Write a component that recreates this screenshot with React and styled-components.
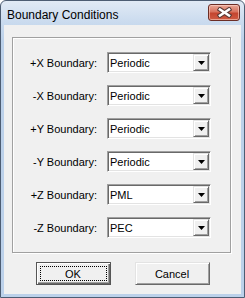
import React from 'react';
import styled, { createGlobalStyle } from 'styled-components';

const Global = createGlobalStyle`
  html, body { margin: 0; padding: 0; background: #fff; }
`;

// Window frame (Windows 7 basic look)
const Window = styled.div`
  width: 245px;
  height: 298px;
  box-sizing: border-box;
  display: flex;
  flex-direction: column;
  border: 1px solid #4d5d73;
  border-radius: 6px 6px 0 0;
  padding: 0 3px 3px;
  background: linear-gradient(#e1eaf5, #c9daee 22px, #bcd1ea 40px, #bcd1ea);
  font-family: "Liberation Sans", Arial, sans-serif;
  color: #000;
  overflow: hidden;
`;

const TitleBar = styled.div`
  height: 24px;
  display: flex;
  align-items: flex-start;
  justify-content: space-between;
  padding: 0 1px 0 3px;
`;

const Title = styled.span`
  font-size: 12px;
  line-height: 14px;
  margin-top: 7px;
  color: #000;
`;

const CloseButton = styled.div`
  width: 32px;
  height: 17px;
  margin-top: 3px;
  box-sizing: border-box;
  border: 1px solid #6b2d25;
  border-radius: 3px;
  background: linear-gradient(#e9a797, #d8735f 45%, #c4452f 55%, #cf5b43);
  box-shadow: inset 0 0 0 1px rgba(255, 220, 210, 0.55);
  display: flex;
  align-items: center;
  justify-content: center;
`;

const Client = styled.div`
  flex: 1;
  background: #f0f0f0;
  display: flex;
  flex-direction: column;
  font-size: 11px;
`;

const GroupBox = styled.div`
  margin: 12px 10px 0 8px;
  padding: 14px 19px 14px 0;
  border: 1px solid #a0a0a0;
  box-shadow: inset 1px 1px #fff, 1px 1px #fff;
  display: grid;
  grid-template-columns: 84px 104px;
  column-gap: 10px;
  row-gap: 12px;
  align-items: center;
`;

const Label = styled.label`
  text-align: right;
  white-space: nowrap;
`;

const Combo = styled.div`
  height: 21px;
  box-sizing: border-box;
  display: flex;
  align-items: center;
  background: #fff;
  border: 1px solid;
  border-color: #a0a0a0 #fff #fff #a0a0a0;
  box-shadow: inset 1px 1px #696969, inset -1px -1px #e3e3e3;
  padding: 1px 1px 1px 2px;
`;

const ComboText = styled.span`
  flex: 1;
  white-space: nowrap;
`;

const DropButton = styled.div`
  width: 16px;
  height: 17px;
  box-sizing: border-box;
  background: #f0f0f0;
  border: 1px solid;
  border-color: #e3e3e3 #696969 #696969 #e3e3e3;
  box-shadow: inset 1px 1px #fff, inset -1px -1px #a0a0a0;
  display: flex;
  align-items: center;
  justify-content: center;
`;

const ButtonRow = styled.div`
  display: flex;
  justify-content: center;
  gap: 24px;
  margin-top: 9px;
`;

const Button = styled.button`
  width: 75px;
  height: 23px;
  box-sizing: border-box;
  padding: ${p => (p.$default ? '3px' : '2px')};
  display: flex;
  background: #f0f0f0;
  font: inherit;
  color: #000;
  border: 1px solid;
  border-color: ${p => (p.$default ? '#555 #555 #555 #555' : '#e3e3e3 #696969 #696969 #e3e3e3')};
  box-shadow: ${p =>
    p.$default
      ? 'inset 1px 1px #fff, inset -1px -1px #696969, inset -2px -2px #a0a0a0'
      : 'inset 1px 1px #fff, inset -1px -1px #a0a0a0'};
`;

const Caption = styled.span`
  flex: 1;
  display: flex;
  align-items: center;
  justify-content: center;
  border: 1px dotted ${p => (p.$focus ? '#000' : 'transparent')};
`;

const Arrow = () => (
  <svg width="7" height="4" viewBox="0 0 7 4">
    <polygon points="0,0 7,0 3.5,4" fill="#000" />
  </svg>
);

const CloseGlyph = () => (
  <svg width="15" height="11" viewBox="0 0 15 11">
    <g strokeLinecap="square">
      <path d="M3 2.5 L12 8.5 M12 2.5 L3 8.5" stroke="#5b3a36" strokeWidth="4.6" />
      <path d="M3 2.5 L12 8.5 M12 2.5 L3 8.5" stroke="#fff" strokeWidth="2.6" />
    </g>
  </svg>
);

const rows = [
  ['+X Boundary:', 'Periodic'],
  ['-X Boundary:', 'Periodic'],
  ['+Y Boundary:', 'Periodic'],
  ['-Y Boundary:', 'Periodic'],
  ['+Z Boundary:', 'PML'],
  ['-Z Boundary:', 'PEC'],
];

export default function App() {
  return (
    <>
      <Global />
      <Window>
        <TitleBar>
          <Title>Boundary Conditions</Title>
          <CloseButton>
            <CloseGlyph />
          </CloseButton>
        </TitleBar>
        <Client>
          <GroupBox>
            {rows.map(([label, value]) => (
              <React.Fragment key={label}>
                <Label>{label}</Label>
                <Combo>
                  <ComboText>{value}</ComboText>
                  <DropButton>
                    <Arrow />
                  </DropButton>
                </Combo>
              </React.Fragment>
            ))}
          </GroupBox>
          <ButtonRow>
            <Button $default>
              <Caption $focus>OK</Caption>
            </Button>
            <Button>
              <Caption>Cancel</Caption>
            </Button>
          </ButtonRow>
        </Client>
      </Window>
    </>
  );
}
